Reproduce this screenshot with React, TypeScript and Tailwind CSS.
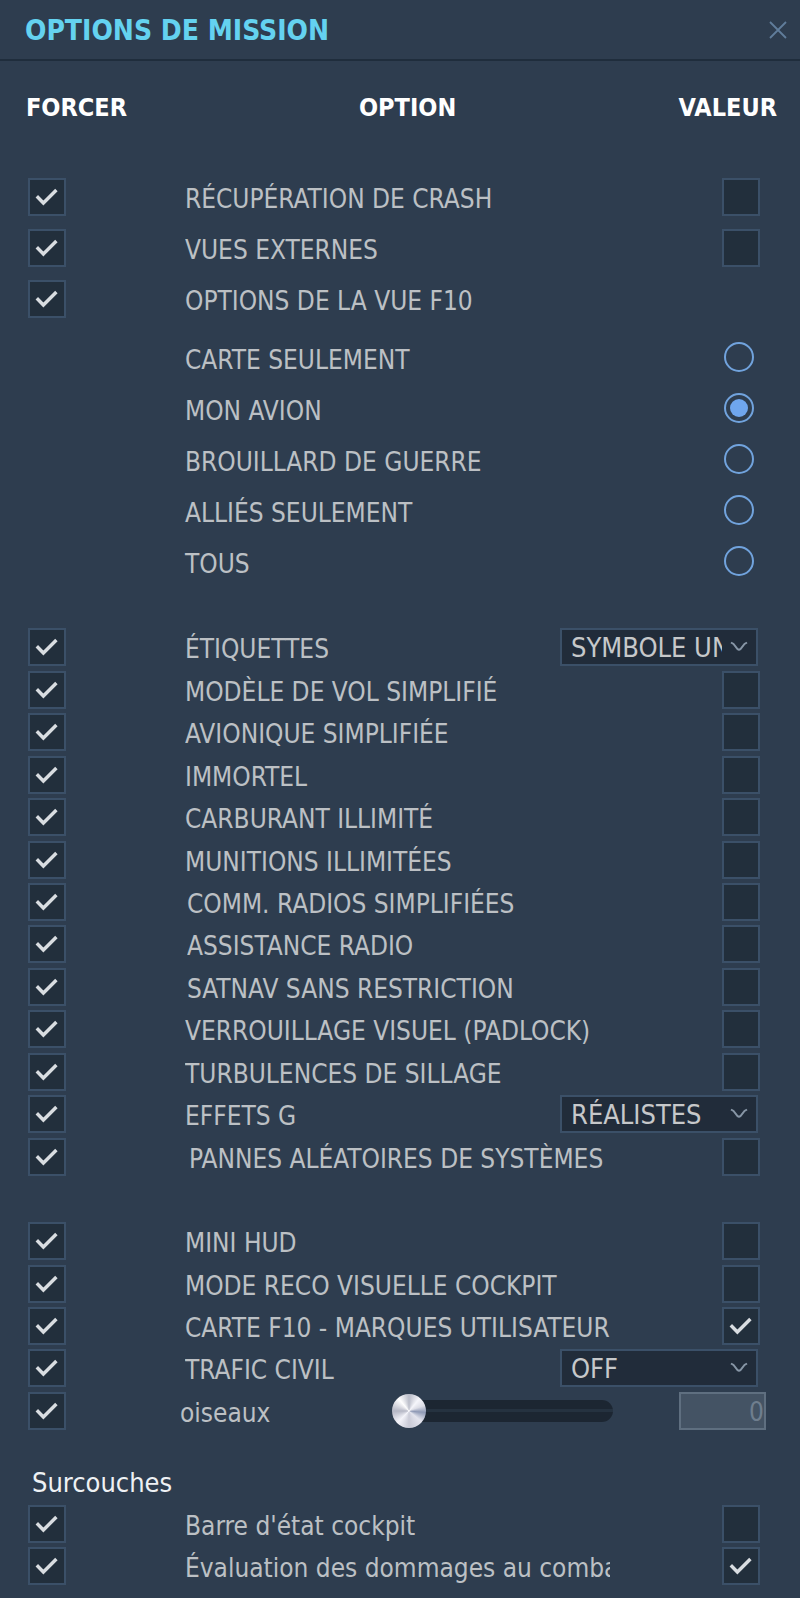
import { useState } from "react";

type Value =
  | { kind: "check"; checked?: boolean }
  | { kind: "select"; options: string[] }
  | { kind: "none" };

type Option = { id: string; label: string; value: Value; indent?: string };

const off: Value = { kind: "check" };
const on: Value = { kind: "check", checked: true };

const viewOptions: Option[] = [
  { id: "crash", label: "RÉCUPÉRATION DE CRASH", value: off },
  { id: "external", label: "VUES EXTERNES", value: off },
  { id: "f10", label: "OPTIONS DE LA VUE F10", value: { kind: "none" } },
];

const mapModes = ["CARTE SEULEMENT", "MON AVION", "BROUILLARD DE GUERRE", "ALLIÉS SEULEMENT", "TOUS"];

const gameplay: Option[] = [
  {
    id: "labels",
    label: "ÉTIQUETTES",
    value: { kind: "select", options: ["SYMBOLE UNIQUEMENT", "COMPLET", "ABRÉGÉ", "OFF"] },
  },
  { id: "flight", label: "MODÈLE DE VOL SIMPLIFIÉ", value: off },
  { id: "avionics", label: "AVIONIQUE SIMPLIFIÉE", value: off },
  { id: "immortal", label: "IMMORTEL", value: off },
  { id: "fuel", label: "CARBURANT ILLIMITÉ", value: off },
  { id: "ammo", label: "MUNITIONS ILLIMITÉES", value: off },
  { id: "comms", label: "COMM. RADIOS SIMPLIFIÉES", value: off, indent: "pl-0.5" },
  { id: "radio", label: "ASSISTANCE RADIO", value: off, indent: "pl-0.5" },
  { id: "satnav", label: "SATNAV SANS RESTRICTION", value: off, indent: "pl-0.5" },
  { id: "padlock", label: "VERROUILLAGE VISUEL (PADLOCK)", value: off },
  { id: "wake", label: "TURBULENCES DE SILLAGE", value: off },
  { id: "geffects", label: "EFFETS G", value: { kind: "select", options: ["RÉALISTES", "SIMPLIFIÉS", "AUCUN"] } },
  { id: "failures", label: "PANNES ALÉATOIRES DE SYSTÈMES", value: off, indent: "pl-1" },
];

const interfaceOptions: Option[] = [
  { id: "minihud", label: "MINI HUD", value: off },
  { id: "recon", label: "MODE RECO VISUELLE COCKPIT", value: off },
  { id: "marks", label: "CARTE F10 - MARQUES UTILISATEUR", value: on },
  { id: "traffic", label: "TRAFIC CIVIL", value: { kind: "select", options: ["OFF", "BAS", "MOYEN", "HAUT"] } },
];

const overlays: Option[] = [
  { id: "statusbar", label: "Barre d'état cockpit", value: off },
  { id: "bda", label: "Évaluation des dommages au combat", value: on },
];

function CheckBox({ id, name, checked = false }: { id?: string; name?: string; checked?: boolean }) {
  return (
    <span className="grid size-[38px] shrink-0 place-items-center">
      <input
        id={id}
        aria-label={name}
        type="checkbox"
        defaultChecked={checked}
        className="peer col-start-1 row-start-1 size-[38px] appearance-none border-2 border-[#3b5068] bg-[#222f3c]"
      />
      <svg
        viewBox="0 0 38 38"
        className="pointer-events-none invisible col-start-1 row-start-1 size-[38px] peer-checked:visible"
        fill="none"
        stroke="#d9dde1"
        strokeWidth="3.4"
      >
        <path d="M8.8 18.2 L15.4 25 L28.4 12" />
      </svg>
    </span>
  );
}

function DropDown({ id, options }: { id: string; options: string[] }) {
  return (
    <span className="grid w-[198px] items-center">
      <select
        id={id}
        className="col-start-1 row-start-1 h-[38px] w-full appearance-none border-2 border-[#3b5068] bg-[#212c3a] pt-0.5 pr-[34px] pl-[9px] text-[27px] leading-[32px] text-[#c6c8ca]"
      >
        {options.map((o) => (
          <option key={o}>{o}</option>
        ))}
      </select>
      <svg
        viewBox="0 0 18 12"
        className="pointer-events-none col-start-1 row-start-1 mr-[10px] h-3 w-[18px] justify-self-end"
        fill="none"
        stroke="#8796a6"
        strokeWidth="2"
      >
        <path d="M1 1.5 L3.5 3 L7.5 8 Q9 9.4 10.5 8 L14.5 3 L17 1.5" />
      </svg>
    </span>
  );
}

function Row({ option }: { option: Option }) {
  const { id, label, value, indent = "pl-0" } = option;
  return (
    <div className="flex items-center">
      <div className="w-[157px] shrink-0">
        <CheckBox name={"Forcer " + label} checked />
      </div>
      <div className={"min-w-0 flex-1 " + indent}>
        <label
          htmlFor={value.kind === "none" ? undefined : id}
          className="block max-w-[425px] overflow-hidden pt-1 whitespace-nowrap"
        >
          {label}
        </label>
      </div>
      {value.kind === "check" && (
        <div className="pr-[6px]">
          <CheckBox id={id} checked={value.checked} />
        </div>
      )}
      {value.kind === "select" && (
        <div className="-ml-[60px] pr-2">
          <DropDown id={id} options={value.options} />
        </div>
      )}
    </div>
  );
}

export default function App() {
  const [birds, setBirds] = useState(0);
  return (
    <div className="min-h-screen bg-[#2e3d4f] pb-3 font-['DejaVu_Sans_Condensed','DejaVu_Sans',sans-serif] text-[26px] leading-[30px] text-[#bcc0c4]">
      <header className="flex h-[61px] items-center justify-between border-b-2 border-[#1f2d3c] pr-[12px] pl-[25px]">
        <h1 className="pt-0.5 text-[28px] font-bold text-[#64d2f0]">OPTIONS DE MISSION</h1>
        <button type="button" aria-label="Fermer" className="p-px">
          <svg viewBox="0 0 18 18" className="size-[18px]" stroke="#607d9b" strokeWidth="1.8">
            <path d="M1 1 L17 17 M17 1 L1 17" />
          </svg>
        </button>
      </header>

      <div className="grid grid-cols-[333px_1fr_auto] pt-8 pr-[23px] pl-[26px] text-[25px] leading-[30px] font-bold text-white">
        <span>FORCER</span>
        <span>OPTION</span>
        <span>VALEUR</span>
      </div>

      <main className="pt-[55px] pr-[34px] pl-7">
        <section className="flex flex-col gap-[13px]">
          {viewOptions.map((o) => (
            <Row key={o.id} option={o} />
          ))}
        </section>

        <fieldset aria-label="Options de la vue F10" className="flex flex-col gap-[21px] pt-6 pb-[50px] pl-[157px]">
          {mapModes.map((mode, i) => (
            <div key={mode} className="flex h-[30px] items-start justify-between pr-[12px]">
              <label htmlFor={"mode" + i} className="pt-[3px]">
                {mode}
              </label>
              <input
                id={"mode" + i}
                type="radio"
                name="mode"
                defaultChecked={i === 1}
                className="size-[30px] appearance-none rounded-full border-2 border-[#71a3dd] bg-clip-content p-[4px] checked:bg-[#6fa6ee]"
              />
            </div>
          ))}
        </fieldset>

        <section className="grid min-h-[552px] auto-rows-fr">
          {gameplay.map((o) => (
            <Row key={o.id} option={o} />
          ))}
        </section>

        <section className="box-content grid min-h-[212px] auto-rows-fr pt-[42px]">
          {interfaceOptions.map((o) => (
            <Row key={o.id} option={o} />
          ))}
          <div className="flex items-center">
            <div className="w-[152px] shrink-0">
              <CheckBox name="Forcer oiseaux" checked />
            </div>
            <label htmlFor="birds" className="w-[212px] pt-1">
              oiseaux
            </label>
            <input
              id="birds"
              type="range"
              min={0}
              max={1000}
              value={birds}
              onChange={(e) => setBirds(Number(e.target.value))}
              className="h-[34px] w-[221px] appearance-none bg-transparent [&::-webkit-slider-runnable-track]:h-[22px] [&::-webkit-slider-runnable-track]:rounded-full [&::-webkit-slider-runnable-track]:bg-[linear-gradient(#1c2632_0_9px,#253240_9px_12px,#1c2632_12px)] [&::-webkit-slider-thumb]:-mt-[6px] [&::-webkit-slider-thumb]:size-[34px] [&::-webkit-slider-thumb]:appearance-none [&::-webkit-slider-thumb]:rounded-full [&::-webkit-slider-thumb]:bg-[conic-gradient(#b9bcc8,#f6f6fb_40deg,#dcdde6_70deg,#8e99b5_95deg,#e4e5ee_130deg,#c9cad6_180deg,#f4f4fa_225deg,#b4b6c4_270deg,#ffffff_320deg,#b9bcc8)]"
            />
            <input
              aria-label="Nombre d'oiseaux"
              type="text"
              value={birds}
              disabled
              className="ml-auto h-[38px] w-[87px] border-2 border-[#5f6f80] bg-[#445364] pt-0.5 text-right text-[#6f7e8e]"
            />
          </div>
        </section>

        <h2 className="pt-[36px] pb-[7px] pl-1 text-[27px] leading-[30px] text-[#eef1f4]">Surcouches</h2>
        <section className="flex flex-col gap-1">
          {overlays.map((o) => (
            <Row key={o.id} option={o} />
          ))}
        </section>
      </main>
    </div>
  );
}
